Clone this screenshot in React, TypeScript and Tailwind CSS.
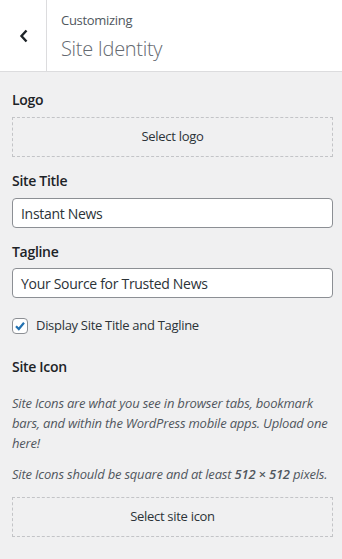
export default function App() {
  return (
    <div className="h-[559px] w-[342px] bg-[#f0f0f1] text-[#1d2327] tracking-[-0.3px]" style={{ fontFamily: "'Open Sans', 'Noto Sans', sans-serif" }}>
      {/* Header */}
      <div className="flex h-[72px] border-b border-[#dcdcde] bg-white">
        <button className="flex w-[47px] shrink-0 items-center justify-center border-r border-[#dcdcde]">
          <svg width="10" height="14" viewBox="0 0 10 14" className="ml-[1px] mt-[1px]">
            <path d="M7.5 1.5 L2.5 7 L7.5 12.5" fill="none" stroke="#1d2327" strokeWidth="2.4" />
          </svg>
        </button>
        <div className="flex flex-col justify-center pl-[14px]">
          <span className="text-[13px] leading-[18px] text-[#50575e]">Customizing</span>
          <span className="mt-[8px] text-[20px] leading-[24px] font-light text-[#646970]">Site Identity</span>
        </div>
      </div>

      <div className="pl-3 pr-[9px] pt-[18px]">
        {/* Logo */}
        <p className="text-[14px] font-semibold leading-5 text-[#1d2327]">Logo</p>
        <button className="mt-[7px] flex h-10 w-full items-center justify-center border border-dashed border-[#c3c4c7] text-[13px] text-[#2c3338]">
          Select logo
        </button>

        {/* Site Title */}
        <p className="mt-[14px] text-[14px] font-semibold leading-5">Site Title</p>
        <div className="mt-[7px] flex h-[30px] items-center rounded-[4px] border border-[#8c8f94] bg-white px-2 text-[14px] text-[#2c3338]">
          Instant News
        </div>

        {/* Tagline */}
        <p className="mt-[14px] text-[14px] font-semibold leading-5">Tagline</p>
        <div className="mt-[6px] flex h-[30px] items-center rounded-[4px] border border-[#8c8f94] bg-white px-2 text-[14px] text-[#2c3338]">
          Your Source for Trusted News
        </div>

        {/* Checkbox */}
        <label className="mt-[20px] flex h-4 items-center gap-2">
          <span className="flex h-4 w-4 items-center justify-center rounded-[4px] border border-[#8c8f94] bg-white">
            <svg width="14" height="14" viewBox="0 0 14 14">
              <path d="M3 7.2 L5.8 10 L11 3.8" fill="none" stroke="#2271b1" strokeWidth="2.2" />
            </svg>
          </span>
          <span className="text-[13px] text-[#2c3338]">Display Site Title and Tagline</span>
        </label>

        {/* Site Icon */}
        <p className="mt-[23px] text-[14px] font-semibold leading-5">Site Icon</p>
        <p className="mt-[16px] text-[13px] italic leading-5 tracking-[-0.2px] text-[#50575e]">
          Site Icons are what you see in browser tabs, bookmark bars, and within the WordPress mobile apps. Upload one here!
        </p>
        <p className="mt-[11px] text-[13px] italic leading-5 tracking-[-0.2px] text-[#50575e]">
          Site Icons should be square and at least <strong className="font-semibold">512 × 512</strong> pixels.
        </p>
        <button className="mt-[13px] flex h-10 w-full items-center justify-center border border-dashed border-[#c3c4c7] text-[13px] text-[#2c3338]">
          Select site icon
        </button>
      </div>
    </div>
  );
}
